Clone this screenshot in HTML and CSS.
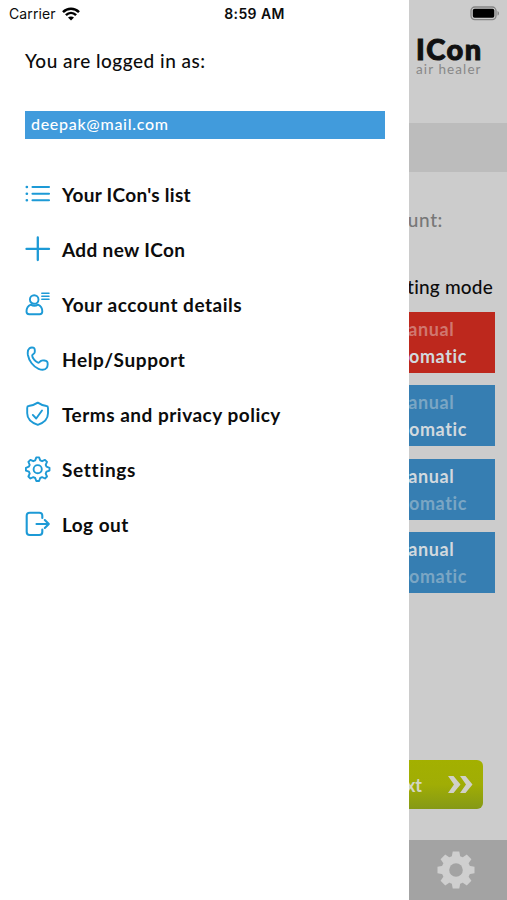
FILE: index.html
```
<!DOCTYPE html>
<html lang="en">
<head>
  <meta charset="UTF-8" />
  <meta name="viewport" content="width=device-width, initial-scale=1.0" />
  <title>ICon air healer</title>
  <link rel="stylesheet" href="styles.css">
</head>
<body>
  <div class="phone">
    <div class="page">
      <header class="page-header">
        <div class="brand">
          <div class="brand-name">ICon</div>
          <div class="brand-sub">air healer</div>
        </div>
      </header>
      <div class="band"></div>
      <main class="content">
        <p class="account">account:</p>
        <p class="mode-title">Operating mode</p>
        <div class="modes">
          <div class="mode red"><span class="off">Manual</span><span>Automatic</span></div>
          <div class="mode"><span class="off">Manual</span><span>Automatic</span></div>
          <div class="mode"><span>Manual</span><span class="off">Automatic</span></div>
          <div class="mode"><span>Manual</span><span class="off">Automatic</span></div>
        </div>
        <button class="next">
          <span>Next</span>
          <svg width="25" height="17" viewBox="0 0 25 17"><path d="M0 0h5.500l7 8.500-7 8.500H0l6-8.500zM12 0h5.500l7 8.500-7 8.500H12l6-8.500z" fill="#d0d0c8"/></svg>
        </button>
      </main>
      <footer class="tabbar">
        <svg width="38" height="38" viewBox="-19 -19 38 38">
          <g fill="#cfcfcf">
            <circle r="14.3"/>
            <path id="tooth" d="M-4.3-13l1-5.5h6.6l1 5.5z"/>
            <use href="#tooth" transform="rotate(45)"/>
            <use href="#tooth" transform="rotate(90)"/>
            <use href="#tooth" transform="rotate(135)"/>
            <use href="#tooth" transform="rotate(180)"/>
            <use href="#tooth" transform="rotate(225)"/>
            <use href="#tooth" transform="rotate(270)"/>
            <use href="#tooth" transform="rotate(315)"/>
          </g>
          <circle r="6.8" fill="#a3a3a3"/>
        </svg>
      </footer>
    </div>

    <aside class="drawer">
      <p class="logged">You are logged in as:</p>
      <div class="email"><span>deepak@mail.com</span></div>
      <nav class="menu">
        <a class="item">
          <svg class="icon" viewBox="0 0 26 26"><path d="M7.500 6H24M7.500 12.700H24M7.500 19.300H24" stroke-width="2.100"/><path d="M1.800 6h.1M1.800 12.700h.1M1.800 19.300h.1" stroke-width="2.600"/></svg>
          <span class="list-label">Your ICon's list</span>
        </a>
        <a class="item">
          <svg class="icon" viewBox="0 0 26 26"><path d="M12.800 1.500v22.500M1.500 12.900H24" stroke-width="2.300"/></svg>
          <span class="add-label">Add new ICon</span>
        </a>
        <a class="item">
          <svg class="icon" viewBox="0 0 26 26"><circle cx="9.200" cy="8.500" r="4.300"/><path d="M5.800 13.600C2.800 14.800 1.500 17.500 1.500 20.500c0 1.700 1 2.700 2.700 2.700h10.400c1.700 0 2.700-1 2.700-2.700 0-3-1.300-5.700-4.300-6.900-2 1.300-5.200 1.300-7.200 0z"/><path d="M16.800 2.200H24M16.800 5.200H24M16.800 8.200H24" stroke-width="1.500"/></svg>
          <span class="account-label">Your account details</span>
        </a>
        <a class="item">
          <svg class="icon" viewBox="0 0 26 26"><path d="M4.500 2.200C5.700 1.300 8.300 1.300 9.200 2.200c.8.900.8 3.900.2 4.900-.5.900-2.100 1.100-2.200 2.500-.1 2 3.300 6.200 5.800 7 1.500.5 1.900-1.200 3-1.800 1.400-.8 5.200-.3 6.100.8.900 1.200.7 4.700-.3 6.100-1.500 2.100-5.200 2.300-8.300 1.100C8.300 20.700 3.900 14.700 2.900 9 2.500 6.200 2.500 3.800 4.500 2.200z"/></svg>
          <span class="help-label">Help/Support</span>
        </a>
        <a class="item">
          <svg class="icon" viewBox="0 0 26 26"><path d="M12.800 1.600C10 3.500 6.600 4.600 3.600 5c-1 .1-1.400.8-1.400 1.900v5.400c0 5.500 4.800 9.600 10.600 11.600 5.800-2 10.200-6.100 10.200-11.600V6.900c0-1.100-.4-1.800-1.500-1.900-3-.4-6-1.500-8.700-3.400z"/><path d="M7.800 13.900l3.400 3.600 5.800-8"/></svg>
          <span class="terms-label">Terms and privacy policy</span>
        </a>
        <a class="item">
          <svg class="icon" viewBox="0 0 26 26"><path d="M11.300 1.400h2.800l1.100 3 1.900.8 2.900-1.300 2 2-1.300 2.900.8 1.900 3 1.100v2.800l-3 1.100-.8 1.900 1.300 2.900-2 2-2.900-1.300-1.900.8-1.100 3h-2.800l-1.100-3-1.900-.8-2.900 1.300-2-2 1.300-2.900-.8-1.900-3-1.100v-2.800l3-1.100.8-1.900-1.300-2.900 2-2 2.900 1.300 1.900-.8z"/><circle cx="12.700" cy="13.200" r="4.100"/></svg>
          <span class="settings-label">Settings</span>
        </a>
        <a class="item">
          <svg class="icon" viewBox="0 0 26 26"><path d="M17.300 7V4.800c0-2-1-3-3-3H4.700c-2 0-3 1-3 3v16.200c0 2 1 3 3 3h9.600c2 0 3-1 3-3v-2.500M11.500 13h12M19.800 9l4 4-4 4" stroke-width="2.100"/></svg>
          <span class="logout-label">Log out</span>
        </a>
      </nav>
    </aside>

    <div class="status">
      <div class="carrier">
        <span>Carrier</span>
        <svg width="18" height="14" viewBox="0 0 18 14"><path d="M1 5.200C5.500.7 12.500.7 17 5.200M3.900 8.100c3-2.900 7.200-2.900 10.200 0" fill="none" stroke="#000" stroke-width="2.500"/><path d="M9 13.500l-3-3c1.600-1.500 4.400-1.500 6 0z"/></svg>
      </div>
      <span class="time">8:59 AM</span>
      <svg class="battery" width="30" height="15" viewBox="0 0 30 15"><rect x="1" y="1" width="25" height="12.600" rx="3.800" fill="none" stroke="#858585" stroke-width="1.300"/><rect x="2.800" y="2.800" width="21.500" height="9" rx="1.800"/><path d="M27.500 5v4.600c2-.8 2-3.800 0-4.600z" fill="#858585"/></svg>
    </div>
  </div>
</body>
</html>
```
FILE: styles.css
```
* {
  box-sizing: border-box;
  margin: 0;
  padding: 0;
}

body {
  font-family: Lato, "Liberation Sans", sans-serif;
  color: #0c0c0c;
}

.phone {
  position: relative;
  width: 507px;
  height: 900px;
  overflow: hidden;
}

/* dimmed page behind the drawer */
.page {
  height: 900px;
  background: #ccc;
  display: flex;
  flex-direction: column;
}

.page-header {
  height: 123px;
  padding: 33px 23px 0 0;
  display: flex;
  justify-content: flex-end;
}

.brand {
  width: 68px;
  white-space: nowrap;
}

.brand-name {
  font-size: 29px;
  line-height: 31px;
  font-weight: 900;
  color: #111;
  letter-spacing: 1.5px;
  -webkit-text-stroke: 1px #111;
}

.brand-sub {
  font-size: 13.500px;
  line-height: 11px;
  color: #888;
  letter-spacing: 1.100px;
}

.band {
  height: 49px;
  background: #bcbcbc;
}

.content {
  flex: 1;
  display: flex;
  flex-direction: column;
  align-items: flex-end;
  padding: 36px 12px 0 0;
}

.account {
  margin-right: 52px;
  font-size: 19px;
  font-weight: 500;
  line-height: 24px;
  color: #777;
  letter-spacing: 0.6px;
}

.mode-title {
  margin-top: 43px;
  margin-right: 2px;
  font-size: 19px;
  font-weight: 500;
  line-height: 24px;
  letter-spacing: 0.2px;
}

.modes {
  display: flex;
  flex-direction: column;
  gap: 12.300px;
  margin-top: 13.200px;
}

.mode {
  width: 148px;
  height: 61px;
  padding-top: 4px;
  padding-left: 3px;
  background: #367eb2;
  color: #d2d9de;
  font-size: 18px;
  font-weight: 700;
  line-height: 27px;
  letter-spacing: 0.600px;
  text-align: center;
  display: flex;
  flex-direction: column;
}

.mode.red {
  background: #bd281d;
}

.mode .off {
  color: #7ba6c4;
}

.mode.red .off {
  color: #d0776f;
}

.next {
  width: 200px;
  height: 49px;
  margin-top: 167px;
  margin-right: 12px;
  padding-right: 10px;
  border: none;
  border-radius: 6px;
  background: linear-gradient(#a3b000, #a0ad05 50%, #859916);
  color: #d3d6c4;
  font: 700 18px Lato, sans-serif;
  display: flex;
  align-items: center;
  justify-content: flex-end;
  gap: 26px;
}

.tabbar {
  height: 60px;
  background: #a3a3a3;
  display: flex;
  align-items: center;
  justify-content: flex-end;
  padding-right: 32px;
}

/* side menu */
.drawer {
  position: absolute;
  left: 0;
  top: 0;
  width: 409px;
  height: 900px;
  background: #fff;
  padding: 49px 24px 0 25px;
}

.logged {
  font-size: 19px;
  font-weight: 500;
  line-height: 24px;
  letter-spacing: 0.5px;
}

.email {
  height: 28px;
  margin-top: 38px;
  padding: 0 6px;
  background: #419bdc;
  color: #fff;
  font-size: 16px;
  font-weight: 500;
  line-height: 26px;
  letter-spacing: 0.7px;
}

.menu {
  display: flex;
  flex-direction: column;
  margin-top: 28px;
}

.item {
  height: 55px;
  display: flex;
  align-items: center;
  gap: 11px;
  font-size: 19px;
  font-weight: 700;
}

.list-label {
  letter-spacing: 0.3px;
}

.add-label {
  letter-spacing: 0.35px;
}

.account-label,
.terms-label {
  letter-spacing: 0.5px;
}

.help-label {
  letter-spacing: 0.6px;
}

.settings-label {
  letter-spacing: 0.7px;
}

.logout-label {
  letter-spacing: 0.45px;
}

.icon {
  width: 26px;
  height: 26px;
  margin-top: -2px;
  fill: none;
  stroke: #1d9ad6;
  stroke-width: 1.900;
  stroke-linecap: round;
  stroke-linejoin: round;
}

.status {
  position: absolute;
  left: 0;
  top: 0;
  width: 507px;
  height: 27px;
  padding: 0 7px 0 9px;
  display: grid;
  grid-template-columns: 1fr auto 1fr;
  align-items: center;
  font: 14px Inter, "Liberation Sans", sans-serif;
}

.carrier {
  display: flex;
  align-items: center;
  gap: 6px;
  letter-spacing: 0.1px;
}

.time {
  font-weight: 600;
  letter-spacing: 0.4px;
}

.battery {
  justify-self: end;
}
```
